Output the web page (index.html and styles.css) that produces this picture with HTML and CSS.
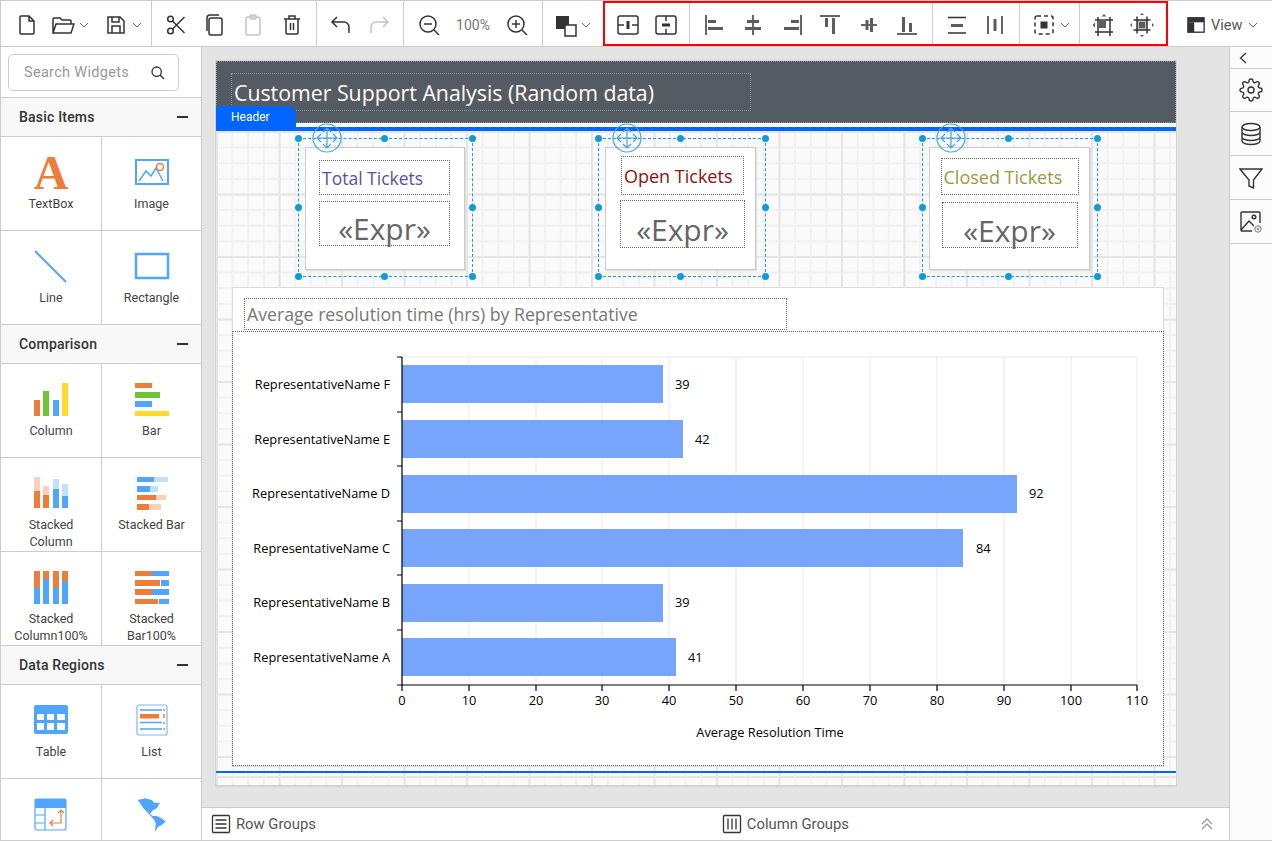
FILE: index.html
```html
<!DOCTYPE html>
<html lang="en">

<head>
    <meta charset="UTF-8">
    <meta name="viewport" content="width=device-width, initial-scale=1.0">
    <title>Report Designer</title>
    <link rel="stylesheet" href="styles.css">
</head>

<body>
    <div class="app">
        <!-- Toolbar -->
        <div class="toolbar">
            <div class="tb-group g-file">
                <span class="tb-btn"><svg class="ic" viewBox="0 0 24 24"><path d="M6 3h8l5 5v12a1 1 0 0 1-1 1H6a1 1 0 0 1-1-1V4a1 1 0 0 1 1-1zM14 3v5h5"/></svg></span>
                <span class="tb-btn tb-drop"><svg class="ic" viewBox="0 0 24 24"><path d="M2 20V6a1 1 0 0 1 1-1h6l2 2h8a1 1 0 0 1 1 1v3M2 20l3-9h18l-3 9z"/></svg><svg class="chev" viewBox="0 0 10 6"><path d="M1 1l4 4 4-4"/></svg></span>
                <span class="tb-btn tb-drop"><svg class="ic" viewBox="0 0 24 24"><path d="M4 4h12l4 4v12H4zM8 4v5h7V4M8 20v-7h8v7"/></svg><svg class="chev" viewBox="0 0 10 6"><path d="M1 1l4 4 4-4"/></svg></span>
            </div>
            <div class="tb-group g-edit">
                <span class="tb-btn"><svg class="ic" viewBox="0 0 24 24"><circle cx="6.5" cy="6" r="2.8"/><circle cx="6.5" cy="18" r="2.8"/><path d="M8.5 8l12 12M8.5 16l12-12"/></svg></span>
                <span class="tb-btn"><svg class="ic" viewBox="0 0 24 24"><rect x="6" y="5" width="13" height="17" rx="2"/><path d="M4 18V5a3 3 0 0 1 3-3h9"/></svg></span>
                <span class="tb-btn"><svg class="ic ic-off" viewBox="0 0 24 24"><rect x="5" y="4" width="14" height="18" rx="2"/><rect x="9" y="2" width="6" height="4" rx="1"/></svg></span>
                <span class="tb-btn"><svg class="ic" viewBox="0 0 24 24"><path d="M4 6h16M9 6V3h6v3M6 6v14a1 1 0 0 0 1 1h10a1 1 0 0 0 1-1V6M10.500 10v7M13.500 10v7"/></svg></span>
            </div>
            <div class="tb-group g-undo">
                <span class="tb-btn"><svg class="ic" viewBox="0 0 24 24"><path d="M8 4L3 9l5 5M3 9h12a5 5 0 0 1 5 5v6"/></svg></span>
                <span class="tb-btn"><svg class="ic ic-off" viewBox="0 0 24 24"><path d="M16 4l5 5-5 5M21 9H9a5 5 0 0 0-5 5v6"/></svg></span>
            </div>
            <div class="tb-group g-zoom">
                <span class="tb-btn"><svg class="ic" viewBox="0 0 24 24"><circle cx="11" cy="11" r="8"/><path d="M7 11h8M17 17l5 5"/></svg></span>
                <span class="zoom-value">100%</span>
                <span class="tb-btn"><svg class="ic" viewBox="0 0 24 24"><circle cx="11" cy="11" r="8"/><path d="M7 11h8M11 7v8M17 17l5 5"/></svg></span>
            </div>
            <div class="tb-group g-fill">
                <span class="tb-btn tb-drop"><svg class="ic" viewBox="0 0 24 24"><rect class="solid" x="3" y="3" width="13" height="13"/><rect x="12" y="12" width="11" height="11" fill="#fff"/></svg><svg class="chev" viewBox="0 0 10 6"><path d="M1 1l4 4 4-4"/></svg></span>
            </div>

            <div class="tb-marked">
                <div class="tb-group g-split">
                    <span class="tb-btn"><svg class="ic" viewBox="0 0 24 24"><rect x="2" y="3" width="20" height="18" rx="2"/><path d="M2 12h6M16 12h6"/><rect class="solid" x="10.500" y="8" width="3" height="8"/></svg></span>
                    <span class="tb-btn"><svg class="ic" viewBox="0 0 24 24"><rect x="2" y="3" width="20" height="18" rx="2"/><path d="M12 3v5M12 16v5"/><rect class="solid" x="8" y="10.500" width="8" height="3"/></svg></span>
                </div>
                <div class="tb-group g-align">
                    <span class="tb-btn"><svg class="ic" viewBox="0 0 24 24"><path d="M3 2v20"/><rect class="solid grey" x="5" y="7" width="8" height="3"/><rect class="solid grey" x="5" y="14" width="15" height="3"/></svg></span>
                    <span class="tb-btn"><svg class="ic" viewBox="0 0 24 24"><path d="M12 2v20"/><rect class="solid grey" x="6" y="7" width="12" height="3"/><rect class="solid grey" x="4" y="14" width="16" height="3"/></svg></span>
                    <span class="tb-btn"><svg class="ic" viewBox="0 0 24 24"><path d="M21 2v20"/><rect class="solid grey" x="11" y="7" width="8" height="3"/><rect class="solid grey" x="4" y="14" width="15" height="3"/></svg></span>
                    <span class="tb-btn"><svg class="ic" viewBox="0 0 24 24"><path d="M2 3h20"/><rect class="solid grey" x="7" y="5" width="3" height="9"/><rect class="solid grey" x="14" y="5" width="3" height="16"/></svg></span>
                    <span class="tb-btn"><svg class="ic" viewBox="0 0 24 24"><path d="M4 12h16"/><rect class="solid grey" x="8.500" y="7" width="3" height="10"/><rect class="solid grey" x="13" y="5" width="3" height="14"/></svg></span>
                    <span class="tb-btn"><svg class="ic" viewBox="0 0 24 24"><path d="M2 21h20"/><rect class="solid grey" x="7" y="4" width="3" height="15"/><rect class="solid grey" x="14" y="10" width="3" height="9"/></svg></span>
                </div>
                <div class="tb-group g-dist">
                    <span class="tb-btn"><svg class="ic" viewBox="0 0 24 24"><path d="M3 4.500h18M3 20h18"/><rect class="solid grey" x="6" y="11" width="12" height="3"/></svg></span>
                    <span class="tb-btn"><svg class="ic" viewBox="0 0 24 24"><path d="M5 3v18M19 3v18"/><rect class="solid grey" x="10.500" y="6" width="3" height="12"/></svg></span>
                </div>
                <div class="tb-group g-center">
                    <span class="tb-btn tb-drop"><svg class="ic" viewBox="0 0 24 24"><rect class="dashed" x="3" y="3" width="18" height="18" rx="2"/><rect class="solid" x="8.500" y="8.500" width="7" height="7"/></svg><svg class="chev" viewBox="0 0 10 6"><path d="M1 1l4 4 4-4"/></svg></span>
                </div>
                <div class="tb-group g-size">
                    <span class="tb-btn"><svg class="ic" viewBox="0 0 24 24"><rect class="solid grey" x="7" y="8" width="7" height="7"/><path d="M6 4v19M18 4v19M3 7h18M3 19h18"/><path class="solid grey" d="M12 1l2.500 2.500h-5zM0.500 12l2.500-2.500v5z"/></svg></span>
                    <span class="tb-btn"><svg class="ic" viewBox="0 0 24 24"><rect class="solid shade" x="7" y="7" width="10" height="10"/><rect class="solid grey" x="9" y="9" width="6" height="6"/><path d="M7 3.500v17M17 3.500v17M3.500 7h17M3.500 17h17"/><path class="solid grey" d="M12 0l2 2h-4zM12 24l2-2h-4zM0 12l2-2v4zM24 12l-2-2v4z"/></svg></span>
                </div>
            </div>

            <div class="view-btn">
                <svg class="ic ic-view" viewBox="0 0 20 20"><rect x="1" y="2" width="18" height="16"/><rect class="solid" x="1" y="2" width="18" height="5"/><rect class="solid" x="1" y="7" width="7" height="11"/></svg>
                <span>View</span>
                <svg class="chev" viewBox="0 0 10 6"><path d="M1 1l4 4 4-4"/></svg>
            </div>
        </div>

        <div class="workspace">
            <!-- Widgets panel -->
            <div class="sidebar">
                <div class="search-wrap">
                    <div class="search">
                        <span>Search Widgets</span>
                        <svg class="ic ic-search" viewBox="0 0 24 24"><circle cx="10" cy="10" r="7"/><path d="M15 15l6 6"/></svg>
                    </div>
                </div>

                <div class="section-head"><span>Basic Items</span><span class="minus"></span></div>
                <div class="widget-grid">
                    <div class="widget">
                        <span class="glyph-a">A</span>
                        <span class="widget-label">TextBox</span>
                    </div>
                    <div class="widget">
                        <svg class="w-icon" viewBox="0 0 34 34"><rect x="1" y="4" width="32" height="24" fill="none" stroke="#4fa5ff" stroke-width="2"/><path d="M4 25l7-10 5 5 5-8 7 13" fill="none" stroke="#4fa5ff" stroke-width="1.500"/><circle cx="25" cy="11" r="3.500" fill="#fff" stroke="#ed7d3a" stroke-width="1.500"/></svg>
                        <span class="widget-label">Image</span>
                    </div>
                    <div class="widget">
                        <svg class="w-icon" viewBox="0 0 34 34"><path d="M1 1l31 31" stroke="#4fa5ff" stroke-width="2"/></svg>
                        <span class="widget-label">Line</span>
                    </div>
                    <div class="widget">
                        <svg class="w-icon" viewBox="0 0 34 34"><rect x="1" y="4" width="32" height="24" fill="none" stroke="#4fa5ff" stroke-width="2.500"/></svg>
                        <span class="widget-label">Rectangle</span>
                    </div>
                </div>

                <div class="section-head"><span>Comparison</span><span class="minus"></span></div>
                <div class="widget-grid">
                    <div class="widget">
                        <svg class="w-icon" viewBox="0 0 34 34"><rect x="0" y="17" width="6" height="16" fill="#ed7d3a"/><rect x="9" y="8" width="6" height="25" fill="#70c332"/><rect x="19" y="17" width="6" height="16" fill="#4fa5ff"/><rect x="28" y="0" width="6" height="33" fill="#ffd92e"/></svg>
                        <span class="widget-label">Column</span>
                    </div>
                    <div class="widget">
                        <svg class="w-icon" viewBox="0 0 34 34"><rect x="0" y="0" width="17" height="5" fill="#ed7d3a"/><rect x="0" y="9" width="25" height="6" fill="#70c332"/><rect x="0" y="18" width="17" height="6" fill="#4fa5ff"/><rect x="0" y="28" width="34" height="5" fill="#ffd92e"/></svg>
                        <span class="widget-label">Bar</span>
                    </div>
                    <div class="widget">
                        <svg class="w-icon" viewBox="0 0 34 34"><rect x="0" y="0" width="6" height="14" fill="#fbd0b8"/><rect x="0" y="14" width="6" height="17" fill="#ed7d3a"/><rect x="9" y="9" width="6" height="9" fill="#fbd0b8"/><rect x="9" y="18" width="6" height="13" fill="#ed7d3a"/><rect x="19" y="2" width="6" height="10" fill="#c3e0ff"/><rect x="19" y="12" width="6" height="19" fill="#4fa5ff"/><rect x="28" y="7" width="6" height="12" fill="#c3e0ff"/><rect x="28" y="19" width="6" height="12" fill="#4fa5ff"/></svg>
                        <span class="widget-label">Stacked Column</span>
                    </div>
                    <div class="widget">
                        <svg class="w-icon" viewBox="0 0 34 34"><rect x="2" y="0" width="17" height="5" fill="#4fa5ff"/><rect x="19" y="0" width="14" height="5" fill="#c3e0ff"/><rect x="2" y="9" width="13" height="6" fill="#4fa5ff"/><rect x="15" y="9" width="8" height="6" fill="#c3e0ff"/><rect x="2" y="18" width="19" height="5" fill="#ed7d3a"/><rect x="21" y="18" width="10" height="5" fill="#fbd0b8"/><rect x="2" y="27" width="12" height="6" fill="#ed7d3a"/><rect x="14" y="27" width="12" height="6" fill="#fbd0b8"/></svg>
                        <span class="widget-label">Stacked Bar</span>
                    </div>
                    <div class="widget">
                        <svg class="w-icon" viewBox="0 0 34 34"><rect x="0" y="0" width="6" height="17" fill="#ed7d3a"/><rect x="0" y="17" width="6" height="16" fill="#4fa5ff"/><rect x="9" y="0" width="6" height="8" fill="#ed7d3a"/><rect x="9" y="8" width="6" height="25" fill="#4fa5ff"/><rect x="19" y="0" width="6" height="17" fill="#ed7d3a"/><rect x="19" y="17" width="6" height="16" fill="#4fa5ff"/><rect x="28" y="0" width="6" height="10" fill="#ed7d3a"/><rect x="28" y="10" width="6" height="23" fill="#4fa5ff"/></svg>
                        <span class="widget-label">Stacked Column100%</span>
                    </div>
                    <div class="widget">
                        <svg class="w-icon" viewBox="0 0 34 34"><rect x="0" y="0" width="17" height="5" fill="#ed7d3a"/><rect x="17" y="0" width="17" height="5" fill="#4fa5ff"/><rect x="0" y="9" width="25" height="6" fill="#ed7d3a"/><rect x="26" y="9" width="8" height="6" fill="#4fa5ff"/><rect x="0" y="18" width="17" height="6" fill="#ed7d3a"/><rect x="17" y="18" width="17" height="6" fill="#4fa5ff"/><rect x="0" y="28" width="23" height="5" fill="#ed7d3a"/><rect x="24" y="28" width="10" height="5" fill="#4fa5ff"/></svg>
                        <span class="widget-label">Stacked Bar100%</span>
                    </div>
                </div>

                <div class="section-head"><span>Data Regions</span><span class="minus"></span></div>
                <div class="widget-grid">
                    <div class="widget">
                        <svg class="w-icon" viewBox="0 0 34 34"><rect x="0" y="1" width="34" height="29" rx="2" fill="#4fa5ff"/><path d="M3 10h7v6H3zM13 10h7v6h-7zM23 10h8v6h-8zM3 19h7v7H3zM13 19h7v7h-7zM23 19h8v7h-8z" fill="#fff"/></svg>
                        <span class="widget-label">Table</span>
                    </div>
                    <div class="widget">
                        <svg class="w-icon" viewBox="0 0 34 34"><rect x="2" y="1" width="30" height="30" rx="2" fill="#fff" stroke="#7fb5ff" stroke-width="1.200"/><path d="M5 6h22M5 18.500h22M5 25h22" stroke="#4fa5ff" stroke-width="1.500"/><rect x="5" y="10" width="19" height="4.500" fill="#ed7d3a"/><path d="M29 5v2M29 10v4M29 18v2M29 24v2" stroke="#ed7d3a" stroke-width="1.500"/></svg>
                        <span class="widget-label">List</span>
                    </div>
                    <div class="widget">
                        <svg class="w-icon" viewBox="0 0 34 34"><rect x="1" y="1" width="31" height="31" rx="2" fill="#fff" stroke="#4fa5ff" stroke-width="1.200"/><rect x="1" y="1" width="31" height="9" fill="#4fa5ff"/><path d="M11 10v22M1 17h10M1 25h10" stroke="#4fa5ff" stroke-width="1.200"/><path d="M27 12v13H16M24 15l3-3 3 3M19 22l-3 3 3 3" fill="none" stroke="#ed7d3a" stroke-width="1.200"/></svg>
                    </div>
                    <div class="widget">
                        <svg class="w-icon" viewBox="0 0 34 34"><path d="M2.700 2L10 .3l6.700 1.700 2.600 2.700H25l-3.300 5.600-4.400 2.400L15 16l2.700 2h4l5 2.300 4 3.400-4 3.300-3.400 1.700-3.300 5 .7-8.400-1.400-3.300-6-6.700-5-5-3.300-5z" fill="#4fa5ff"/></svg>
                    </div>
                </div>
            </div>

            <!-- Design area -->
            <div class="center">
                <div class="canvas-area">
                    <div class="surface">
                        <div class="band">
                            <div class="band-title">Customer Support Analysis (Random data)</div>
                        </div>
                        <div class="header-tab">Header</div>
                        <div class="band-gap"></div>
                        <div class="report-body">
                            <div class="sel sel-1">
                                <div class="card">
                                    <div class="cell-title title-1">Total Tickets</div>
                                    <div class="cell-expr">«Expr»</div>
                                </div>
                                <svg class="move" viewBox="0 0 30 30"><circle cx="15" cy="15" r="14" /><path d="M15 5v20M5 15h20M11 9l4-4 4 4M11 21l4 4 4-4M9 11l-4 4 4 4M21 11l4 4-4 4"/></svg>
                                <i class="h tl"></i><i class="h tc"></i><i class="h tr"></i><i class="h ml"></i><i class="h mr"></i><i class="h bl"></i><i class="h bc"></i><i class="h br"></i>
                            </div>
                            <div class="sel sel-2">
                                <div class="card">
                                    <div class="cell-title title-2">Open Tickets</div>
                                    <div class="cell-expr">«Expr»</div>
                                </div>
                                <svg class="move" viewBox="0 0 30 30"><circle cx="15" cy="15" r="14" /><path d="M15 5v20M5 15h20M11 9l4-4 4 4M11 21l4 4 4-4M9 11l-4 4 4 4M21 11l4 4-4 4"/></svg>
                                <i class="h tl"></i><i class="h tc"></i><i class="h tr"></i><i class="h ml"></i><i class="h mr"></i><i class="h bl"></i><i class="h bc"></i><i class="h br"></i>
                            </div>
                            <div class="sel sel-3">
                                <div class="card">
                                    <div class="cell-title title-3">Closed Tickets</div>
                                    <div class="cell-expr">«Expr»</div>
                                </div>
                                <svg class="move" viewBox="0 0 30 30"><circle cx="15" cy="15" r="14" /><path d="M15 5v20M5 15h20M11 9l4-4 4 4M11 21l4 4 4-4M9 11l-4 4 4 4M21 11l4 4-4 4"/></svg>
                                <i class="h tl"></i><i class="h tc"></i><i class="h tr"></i><i class="h ml"></i><i class="h mr"></i><i class="h bl"></i><i class="h bc"></i><i class="h br"></i>
                            </div>

                            <div class="chart-box">
                                <div class="chart-title">Average resolution time (hrs) by Representative</div>
                                <div class="chart-frame">
                                    <svg class="chart" viewBox="233 332 930 433">
                                        <g class="gridlines">
                                            <path d="M469 357v328M536 357v328M602 357v328M669 357v328M736 357v328M803 357v328M870 357v328M937 357v328M1004 357v328M1071 357v328M1137 357v328M402 357h735"/>
                                        </g>
                                        <g class="bars">
                                            <rect x="402" y="365" width="261" height="38"/>
                                            <rect x="402" y="420" width="281" height="38"/>
                                            <rect x="402" y="475" width="615" height="38"/>
                                            <rect x="402" y="529" width="561" height="38"/>
                                            <rect x="402" y="584" width="261" height="38"/>
                                            <rect x="402" y="638" width="274" height="38"/>
                                        </g>
                                        <path class="axis" d="M402 357v328h735M397 357h5M397 412h5M397 466h5M397 521h5M397 575h5M397 630h5M397 685h5M402 685v6M469 685v6M536 685v6M602 685v6M669 685v6M736 685v6M803 685v6M870 685v6M937 685v6M1004 685v6M1071 685v6M1137 685v6"/>
                                        <g class="cat-labels">
                                            <text x="390" y="389">RepresentativeName F</text>
                                            <text x="390" y="444">RepresentativeName E</text>
                                            <text x="390" y="498">RepresentativeName D</text>
                                            <text x="390" y="553">RepresentativeName C</text>
                                            <text x="390" y="607">RepresentativeName B</text>
                                            <text x="390" y="662">RepresentativeName A</text>
                                        </g>
                                        <g class="val-labels">
                                            <text x="675" y="389">39</text>
                                            <text x="695" y="444">42</text>
                                            <text x="1029" y="498">92</text>
                                            <text x="976" y="553">84</text>
                                            <text x="675" y="607">39</text>
                                            <text x="688" y="662">41</text>
                                        </g>
                                        <g class="tick-labels">
                                            <text x="402" y="705">0</text>
                                            <text x="469" y="705">10</text>
                                            <text x="536" y="705">20</text>
                                            <text x="602" y="705">30</text>
                                            <text x="669" y="705">40</text>
                                            <text x="736" y="705">50</text>
                                            <text x="803" y="705">60</text>
                                            <text x="870" y="705">70</text>
                                            <text x="937" y="705">80</text>
                                            <text x="1004" y="705">90</text>
                                            <text x="1071" y="705">100</text>
                                            <text x="1137" y="705">110</text>
                                            <text x="770" y="737">Average Resolution Time</text>
                                        </g>
                                    </svg>
                                </div>
                            </div>
                        </div>
                        <div class="report-foot"></div>
                    </div>
                </div>

                <div class="groups-bar">
                    <svg class="ic ic-row" viewBox="0 0 20 20"><rect x="1.500" y="1.500" width="17" height="17" rx="1"/><path d="M4.500 6h11M4.500 10h11M4.500 14h11"/></svg>
                    <span class="groups-label">Row Groups</span>
                    <svg class="ic ic-row col-icon" viewBox="0 0 20 20"><rect x="1.500" y="1.500" width="17" height="17" rx="1"/><path d="M6 4.500v11M10 4.500v11M14 4.500v11"/></svg>
                    <span class="groups-label">Column Groups</span>
                    <svg class="double-up" viewBox="0 0 12 12"><path d="M1 6l5-5 5 5M1 11l5-5 5 5"/></svg>
                </div>
            </div>

            <!-- Right panel -->
            <div class="rightbar">
                <div class="rb-collapse"><svg class="rb-chev" viewBox="0 0 8 12"><path d="M7 1L1.500 6 7 11"/></svg></div>
                <div class="rb-btn"><svg class="ic rb-ic" viewBox="0 0 24 24"><circle cx="12" cy="12" r="3"/><path d="M19.400 15a1.650 1.650 0 0 0 .33 1.820l.06.06a2 2 0 0 1 0 2.830 2 2 0 0 1-2.830 0l-.06-.06a1.650 1.650 0 0 0-1.820-.33 1.650 1.650 0 0 0-1 1.510V21a2 2 0 0 1-2 2 2 2 0 0 1-2-2v-.09A1.650 1.650 0 0 0 9 19.400a1.650 1.650 0 0 0-1.820.33l-.06.06a2 2 0 0 1-2.830 0 2 2 0 0 1 0-2.830l.06-.06a1.650 1.650 0 0 0 .33-1.820 1.650 1.650 0 0 0-1.510-1H3a2 2 0 0 1-2-2 2 2 0 0 1 2-2h.09A1.650 1.650 0 0 0 4.600 9a1.650 1.650 0 0 0-.33-1.820l-.06-.06a2 2 0 0 1 0-2.830 2 2 0 0 1 2.830 0l.06.06a1.650 1.650 0 0 0 1.820.33H9a1.650 1.650 0 0 0 1-1.510V3a2 2 0 0 1 2-2 2 2 0 0 1 2 2v.09a1.650 1.650 0 0 0 1 1.510 1.650 1.650 0 0 0 1.820-.33l.06-.06a2 2 0 0 1 2.830 0 2 2 0 0 1 0 2.830l-.06.06a1.650 1.650 0 0 0-.33 1.820V9a1.650 1.650 0 0 0 1.510 1H21a2 2 0 0 1 2 2 2 2 0 0 1-2 2h-.09a1.650 1.650 0 0 0-1.510 1z"/></svg></div>
                <div class="rb-btn"><svg class="ic rb-ic" viewBox="0 0 24 24"><ellipse cx="12" cy="5" rx="9" ry="3.500"/><path d="M3 5v14c0 2 4 3.500 9 3.500s9-1.500 9-3.500V5M3 10c0 2 4 3.500 9 3.500s9-1.500 9-3.500M3 15c0 2 4 3.500 9 3.500s9-1.500 9-3.500"/></svg></div>
                <div class="rb-btn"><svg class="ic rb-ic" viewBox="0 0 24 24"><path d="M1 3h22l-8.500 11v8l-4.500-2v-6z"/></svg></div>
                <div class="rb-btn"><svg class="ic rb-ic" viewBox="0 0 24 24"><path d="M13 21H3a1 1 0 0 1-1-1V3a1 1 0 0 1 1-1h17a1 1 0 0 1 1 1v10M2 20l8-9 5 5"/><circle cx="15" cy="7" r="1.800"/><circle class="mini-gear" cx="19" cy="19" r="3.200"/><circle class="mini-gear" cx="19" cy="19" r="1"/></svg></div>
            </div>
        </div>
    </div>
</body>

</html>
```

FILE: styles.css
```css
* {
    box-sizing: border-box;
}

html,
body {
    margin: 0;
    padding: 0;
    background-color: #fff;
}

body {
    font-family: Roboto, Arial, sans-serif;
    color: #333;
    overflow: hidden;
}

.app {
    width: 1272px;
    height: 841px;
    border: 1px solid #ccc;
    border-right: none;
    overflow: hidden;
    display: flex;
    flex-direction: column;
}

/* Icons */
.ic {
    width: 24px;
    height: 24px;
    fill: none;
    stroke: #333;
    stroke-width: 1.500;
    flex: none;
}

.ic-off {
    stroke: #c4c4c4;
}

.solid {
    fill: #333;
    stroke: none;
}

.grey {
    fill: #5c5c5c;
}

.shade {
    fill: #bbb;
}

.dashed {
    stroke-dasharray: 4 3;
}

.chev {
    width: 10px;
    height: 6px;
    fill: none;
    stroke: #666;
    stroke-width: 1;
    flex: none;
}

/* Toolbar */
.toolbar {
    height: 46px;
    flex: none;
    display: flex;
    border-bottom: 1px solid #ccc;
}

.tb-group {
    display: flex;
    align-items: center;
    justify-content: center;
    border-right: 1px solid #ccc;
    flex: none;
    padding-top: 3px;
}

.tb-btn {
    width: 38.600px;
    height: 38px;
    display: flex;
    align-items: center;
    justify-content: center;
    flex: none;
}

.tb-drop {
    width: 53px;
    justify-content: flex-start;
    gap: 4px;
    padding-left: 0;
}

.g-file {
    width: 151px;
    justify-content: flex-start;
    padding-left: 7px;
}

.g-file .tb-drop {
    margin-left: 4px;
    margin-right: -4px;
}

.g-edit {
    width: 165px;
}

.g-undo {
    width: 87px;
}

.g-zoom {
    width: 139px;
}

.zoom-value {
    width: 50px;
    text-align: center;
    font-size: 14px;
    color: #777;
}

.g-fill {
    width: 60px;
    border-right: none;
    justify-content: flex-start;
    padding-left: 10px;
}

.tb-marked {
    width: 565px;
    height: 45px;
    flex: none;
    display: flex;
    border: 2px solid #f00;
}

.tb-marked .tb-group {
    height: 41px;
}

.g-split {
    width: 85px;
}

.g-align {
    width: 243px;
}

.g-dist {
    width: 87px;
}

.g-center {
    width: 60px;
    justify-content: flex-start;
    padding-left: 12px;
}

.tb-marked .g-size {
    flex: 1;
    border-right: none;
}

.view-btn {
    display: flex;
    align-items: center;
    padding: 3px 0 0 19px;
    gap: 6px;
    font-size: 14.500px;
    color: #555;
}

.ic-view {
    width: 18px;
    height: 18px;
}

/* Workspace */
.workspace {
    flex: 1;
    min-height: 0;
    display: flex;
}

.sidebar {
    width: 201px;
    flex: none;
    border-right: 1px solid #ccc;
    overflow: hidden;
}

.search-wrap {
    height: 51px;
    padding: 7px 22px 0 7px;
    border-bottom: 1px solid #ccc;
}

.search {
    height: 37px;
    border: 1px solid #ccc;
    border-radius: 5px;
    display: flex;
    align-items: center;
    justify-content: space-between;
    padding: 0 12px 0 15px;
    font-size: 14.500px;
    letter-spacing: 0.300px;
    color: #999;
}

.ic-search {
    width: 16px;
    height: 16px;
    stroke-width: 2;
}

.section-head {
    height: 39px;
    padding: 0 13px 0 18px;
    background-color: #f8f8f8;
    border-bottom: 1px solid #ccc;
    display: flex;
    align-items: center;
    justify-content: space-between;
    font-size: 14px;
    font-weight: 500;
    letter-spacing: 0.200px;
    color: #333;
}

.minus {
    width: 11px;
    height: 1.500px;
    background-color: #333;
}

.widget-grid {
    display: grid;
    grid-template-columns: 101px 99px;
    grid-auto-rows: 94px;
}

.widget {
    padding-top: 19px;
    display: flex;
    flex-direction: column;
    align-items: center;
    border-bottom: 1px solid #ccc;
    overflow: hidden;
}

.widget:nth-child(odd) {
    border-right: 1px solid #ccc;
}

.w-icon {
    width: 34px;
    height: 34px;
    flex: none;
    overflow: visible;
}

.widget-label {
    margin-top: 5px;
    width: 90px;
    text-align: center;
    font-size: 12.500px;
    line-height: 17px;
    color: #444;
}

.glyph-a {
    height: 34px;
    font-family: "Liberation Serif", serif;
    font-weight: bold;
    font-size: 48px;
    line-height: 34px;
    color: #ed7d3a;
}

/* Center */
.center {
    flex: 1;
    min-width: 0;
    display: flex;
    flex-direction: column;
}

.canvas-area {
    flex: 1;
    min-height: 0;
    padding: 14px 0 0 14px;
    background-color: #e4e4e4;
    border-bottom: 1px solid #ccc;
}

.surface {
    position: relative;
    width: 960px;
    height: 725px;
    display: flex;
    flex-direction: column;
    box-shadow: 0 0 0 1px #d4d4d4;
}

.band {
    height: 62px;
    flex: none;
    padding: 11px 0 0 14px;
    background-color: #555b62;
    border: 1px dotted #8a8f94;
}

.band-title {
    width: 520px;
    height: 38px;
    padding: 4px 0 0 2px;
    border: 1px dotted #8a8f94;
    font-family: "Open Sans", sans-serif;
    font-size: 21.300px;
    line-height: 30px;
    color: #fff;
    white-space: nowrap;
}

.header-tab {
    position: absolute;
    left: 0;
    top: 45px;
    width: 80px;
    height: 22px;
    padding-left: 15px;
    background-color: #0066ff;
    border-top-right-radius: 8px;
    font-size: 12px;
    line-height: 22px;
    color: #fff;
}

.band-gap {
    height: 4px;
    flex: none;
    background-color: #fafafa;
}

.report-body,
.report-foot {
    background-color: #fafafa;
    background-image:
        linear-gradient(#e6e6e6 2px, transparent 2px),
        linear-gradient(90deg, #e6e6e6 2px, transparent 2px),
        linear-gradient(#f2f2f2 2px, transparent 2px),
        linear-gradient(90deg, #f2f2f2 2px, transparent 2px);
    background-size: 62.500px 62.500px, 62.500px 62.500px, 15.625px 15.625px, 15.625px 15.625px;
}

.report-body {
    position: relative;
    height: 646px;
    flex: none;
    border-top: 4px solid #0066ff;
    border-bottom: 2px solid #0066ff;
}

.report-foot {
    flex: 1;
    border-bottom: 1px solid #d4d4d4;
    background-position: 0 3px;
}

/* Selected items on the report surface */
.sel {
    position: absolute;
    top: 7px;
    height: 139px;
    border: 1px dashed #1a9fdd;
    padding: 8px 0 0 6px;
}

.sel-1 {
    left: 82px;
    width: 175px;
}

.sel-2 {
    left: 382px;
    width: 168px;
}

.sel-3 {
    left: 706px;
    width: 176px;
}

.card {
    height: 123px;
    background-color: #fff;
    border: 1px solid #ccc;
    box-shadow: 1px 1px 0 #ddd;
    display: flex;
    flex-direction: column;
    align-items: center;
}

.sel-1 .card {
    width: 160px;
    padding-right: 1px;
}

.sel-2 .card {
    width: 151px;
    padding-left: 4px;
}

.sel-3 .card {
    width: 161px;
}

.cell-title,
.cell-expr {
    border: 1px dotted #666;
    font-family: "Open Sans", sans-serif;
    white-space: nowrap;
}

.cell-title {
    font-size: 18px;
    padding-left: 2px;
    display: flex;
    align-items: center;
}

.cell-expr {
    padding-top: 10px;
    font-size: 30px;
    color: #666;
    display: flex;
    align-items: center;
    justify-content: center;
}

.title-1 {
    margin-top: 12px;
    width: 131px;
    height: 35px;
    font-size: 17.500px;
    color: #5454a4;
}

.title-1 + .cell-expr {
    margin-top: 6px;
    width: 131px;
    height: 45px;
}

.title-2 {
    margin-top: 8px;
    width: 123px;
    height: 39px;
    color: #8b1010;
}

.title-2 + .cell-expr {
    margin-top: 5px;
    width: 125px;
    height: 48px;
}

.title-3 {
    margin-top: 10px;
    width: 138px;
    height: 37px;
    color: #9a9a40;
}

.title-3 + .cell-expr {
    margin-top: 7px;
    width: 136px;
    height: 46px;
}

.move {
    position: absolute;
    left: 13px;
    top: -16px;
    width: 30px;
    height: 30px;
    fill: none;
    stroke: #4aa3df;
    stroke-width: 1.200;
}

.h {
    position: absolute;
    width: 7px;
    height: 7px;
    border-radius: 50%;
    background-color: #0f9ad9;
}

.tl,
.tc,
.tr {
    top: -4px;
}

.ml,
.mr {
    top: 65px;
}

.bl,
.bc,
.br {
    bottom: -4px;
}

.tl,
.ml,
.bl {
    left: -4px;
}

.tr,
.mr,
.br {
    right: -4px;
}

.tc,
.bc {
    left: 82px;
}

.sel-2 .tc,
.sel-2 .bc {
    left: 78px;
}

/* Chart */
.chart-box {
    position: absolute;
    left: 16px;
    top: 156px;
    width: 932px;
    height: 480px;
    background-color: #fff;
    border: 1px solid #ddd;
    display: flex;
    flex-direction: column;
}

.chart-title {
    width: 543px;
    height: 32px;
    margin: 10px 0 0 11px;
    padding-left: 2px;
    border: 1px dotted #666;
    font-family: "Open Sans", sans-serif;
    font-size: 17.700px;
    line-height: 30px;
    color: #777;
    white-space: nowrap;
    flex: none;
}

.chart-frame {
    flex: 1;
    margin: 1px 0 0 -1px;
    border: 1px dotted #666;
    width: 932px;
}

.chart {
    display: block;
    width: 930px;
    height: 433px;
    font-family: "Open Sans", sans-serif;
    font-size: 12.800px;
    fill: #000;
}

.gridlines {
    fill: none;
    stroke: #f1f1f1;
    stroke-width: 1.500;
}

.bars {
    fill: #76a5fb;
}

.axis {
    fill: none;
    stroke: #000;
    stroke-width: 1.200;
}

.cat-labels {
    text-anchor: end;
}

.tick-labels {
    text-anchor: middle;
}

/* Bottom bar */
.groups-bar {
    height: 32px;
    flex: none;
    display: flex;
    align-items: center;
    padding-left: 9px;
    font-size: 14.800px;
    color: #555;
}

.ic-row {
    width: 20px;
    height: 20px;
    stroke-width: 1.300;
}

.groups-label {
    margin-left: 5px;
}

.col-icon {
    margin-left: 406px;
}

.double-up {
    width: 12px;
    height: 12px;
    margin-left: auto;
    margin-right: 16px;
    fill: none;
    stroke: #999;
    stroke-width: 1.300;
}

/* Right panel */
.rightbar {
    width: 43px;
    flex: none;
    background-color: #fcfcfc;
    border-left: 1px solid #ccc;
}

.rb-collapse {
    height: 22px;
    padding-left: 9px;
    display: flex;
    align-items: center;
    border-bottom: 1px solid #ccc;
}

.rb-chev {
    width: 8px;
    height: 12px;
    fill: none;
    stroke: #333;
    stroke-width: 1.300;
}

.rb-btn {
    height: 44px;
    display: flex;
    align-items: center;
    justify-content: center;
    border-bottom: 1px solid #ccc;
}

.rb-collapse + .rb-btn {
    height: 43px;
}

.rb-ic {
    stroke-width: 1.400;
}

.mini-gear {
    fill: #fff;
    stroke: #6b7a8f;
    stroke-width: 1;
}
```
